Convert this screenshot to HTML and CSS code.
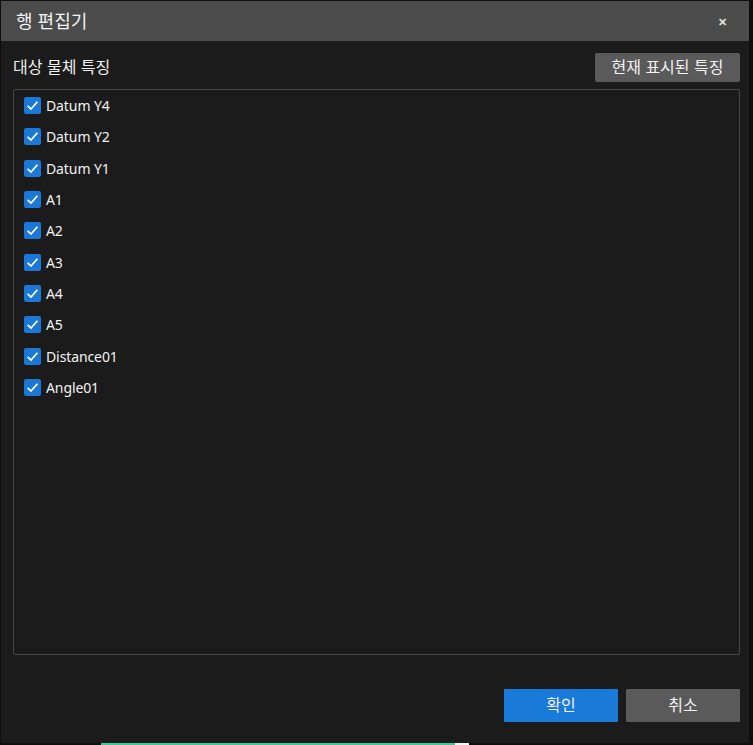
FILE: index.html
```html
<!DOCTYPE html>
<html lang="ko">

<head>
    <meta charset="UTF-8">
    <meta name="viewport" content="width=device-width, initial-scale=1.0">
    <title>행 편집기</title>
    <link rel="stylesheet" href="styles.css">
</head>

<body>
    <div class="dialog">
        <div class="title-bar">
            <span class="title">행 편집기</span>
            <span class="close">&#x2715;</span>
        </div>

        <div class="content">
            <div class="toolbar">
                <span class="label">대상 물체 특징</span>
                <button class="btn btn-gray btn-shown">현재 표시된 특징</button>
            </div>

            <ul class="feature-list" id="featureList">
                <!-- items are filled in below -->
            </ul>
        </div>

        <div class="footer">
            <button class="btn btn-primary">확인</button>
            <button class="btn btn-gray">취소</button>
        </div>
    </div>

    <div class="under-strip">
        <span class="seg seg-a"></span>
        <span class="seg seg-b"></span>
        <span class="seg seg-c"></span>
    </div>

    <script>
        // Feature names shown in the list
        const features = ["Datum Y4", "Datum Y2", "Datum Y1", "A1", "A2", "A3", "A4", "A5", "Distance01", "Angle01"];

        const list = document.getElementById('featureList');
        const check = '<svg viewBox="0 0 17 17" width="17" height="17"><path d="M3.6 8.8 L7 12 L13.4 4.8" fill="none" stroke="#fff" stroke-width="1.7"/></svg>';

        features.forEach(name => {
            const li = document.createElement('li');
            li.className = 'feature-item';
            li.innerHTML = `<span class="checkbox">${check}</span><span class="feature-name">${name}</span>`;
            list.appendChild(li);
        });
    </script>
</body>

</html>
```

FILE: styles.css
```css
* {
    margin: 0;
    padding: 0;
    box-sizing: border-box;
}

html,
body {
    height: 100%;
}

body {
    font-family: "Noto Sans", "Noto Sans CJK KR", sans-serif;
    color: #f0f0f0;
    background: #0e0e0e;
    padding: 1px 4px 0 1px;
    overflow: hidden;
}

/* Dialog */
.dialog {
    height: 742px;
    background: #1b1b1b;
    display: flex;
    flex-direction: column;
}

.title-bar {
    height: 40px;
    background: #4b4b4b;
    display: flex;
    align-items: center;
    justify-content: space-between;
    padding: 0 22px 0 15px;
}

.title {
    font-family: "Noto Sans CJK KR", sans-serif;
    font-size: 18px;
    line-height: 1;
    padding-bottom: 3px;
    color: #f2f2f2;
}

.close {
    font-size: 11px;
    color: #e0e0e0;
    font-weight: bold;
}

/* Content */
.content {
    flex: 1;
    padding: 12px 9px 0 12px;
    display: flex;
    flex-direction: column;
}

.toolbar {
    display: flex;
    align-items: center;
    justify-content: space-between;
    height: 29px;
    margin-bottom: 7px;
}

.label {
    font-family: "Noto Sans CJK KR", sans-serif;
    font-size: 16px;
    line-height: 1;
    padding-bottom: 4px;
    color: #f0f0f0;
}

.feature-list {
    list-style: none;
    height: 566px;
    border: 1px solid #474747;
    border-radius: 2px;
    padding: 0 0 0 10px;
}

.feature-item {
    display: flex;
    align-items: center;
    height: 31.3px;
}

.checkbox {
    width: 17px;
    height: 17px;
    background: #1a78d6;
    border-radius: 2px;
    display: flex;
    margin-right: 5px;
}

.feature-name {
    font-size: 14px;
    color: #f2f2f2;
    letter-spacing: -0.1px;
}

/* Buttons */
.btn {
    font-family: "Noto Sans CJK KR", sans-serif;
    font-size: 16px;
    line-height: 1;
    padding-bottom: 4px;
    color: #f2f2f2;
    border: none;
    border-radius: 1px;
    cursor: pointer;
}

.btn-gray {
    background: #5a5a5a;
}

.btn-primary {
    background: #1a7ad9;
}

.btn-shown {
    width: 145px;
    height: 29px;
    border-radius: 2px;
}

.footer {
    display: flex;
    justify-content: flex-end;
    gap: 8px;
    padding: 0 9px 21px 0;
}

.footer .btn {
    width: 114px;
    height: 33px;
}

/* Bit of the app behind the dialog */
.under-strip {
    height: 2px;
    display: flex;
    background: #0e0e0e;
}

.seg {
    height: 2px;
}

.seg-a {
    width: 100px;
    background: #0e0e0e;
}

.seg-b {
    width: 354px;
    background: #3cc99a;
}

.seg-c {
    width: 14px;
    background: #f4f4f4;
}
```
